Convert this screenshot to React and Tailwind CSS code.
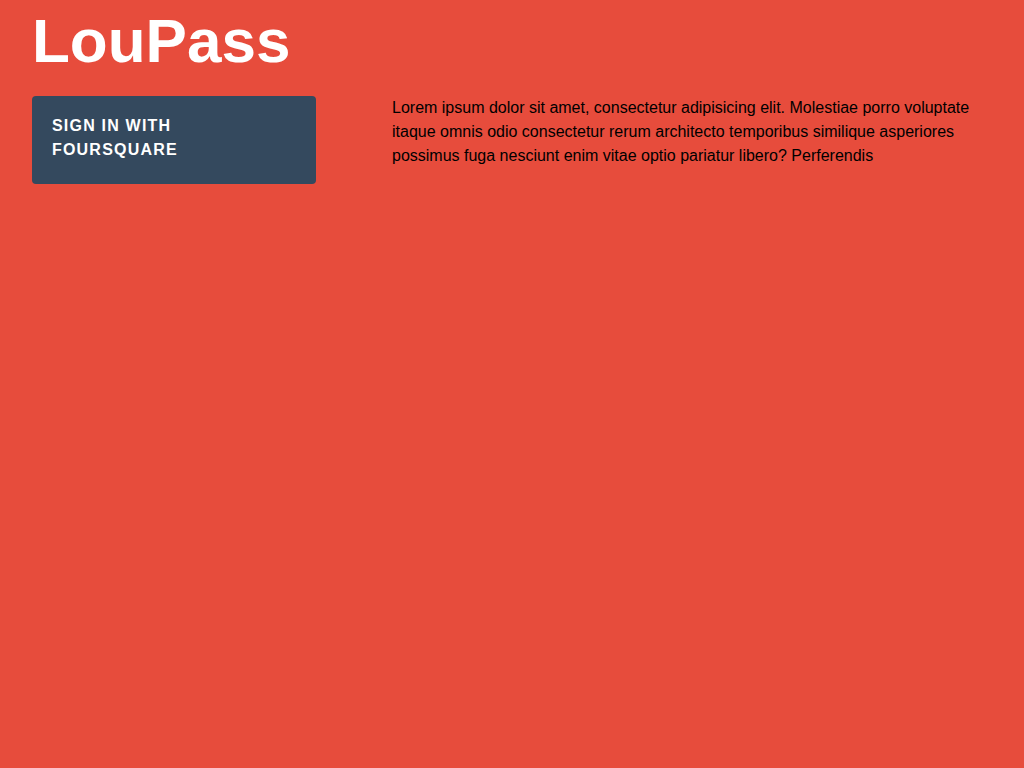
export default function App() {
  return (
    <div className="min-h-screen bg-[#e74c3c] px-8 font-['Liberation_Sans',Arial,sans-serif]">
      <h1 className="pt-[10px] text-[62px] leading-[62px] font-bold text-white">LouPass</h1>
      <div className="mt-6 flex items-start gap-[76px]">
        <button className="w-[284px] shrink-0 rounded bg-[#34495e] px-5 pt-[18px] pb-[22px] text-left text-[16px] leading-6 font-bold tracking-[1.2px] text-white">
          SIGN IN WITH
          <br />
          FOURSQUARE
        </button>
        <p className="flex-1 text-[16px] leading-6 text-black">
          Lorem ipsum dolor sit amet, consectetur adipisicing elit. Molestiae porro voluptate itaque omnis odio consectetur rerum architecto temporibus similique asperiores possimus fuga nesciunt enim vitae optio pariatur libero? Perferendis
        </p>
      </div>
    </div>
  );
}
